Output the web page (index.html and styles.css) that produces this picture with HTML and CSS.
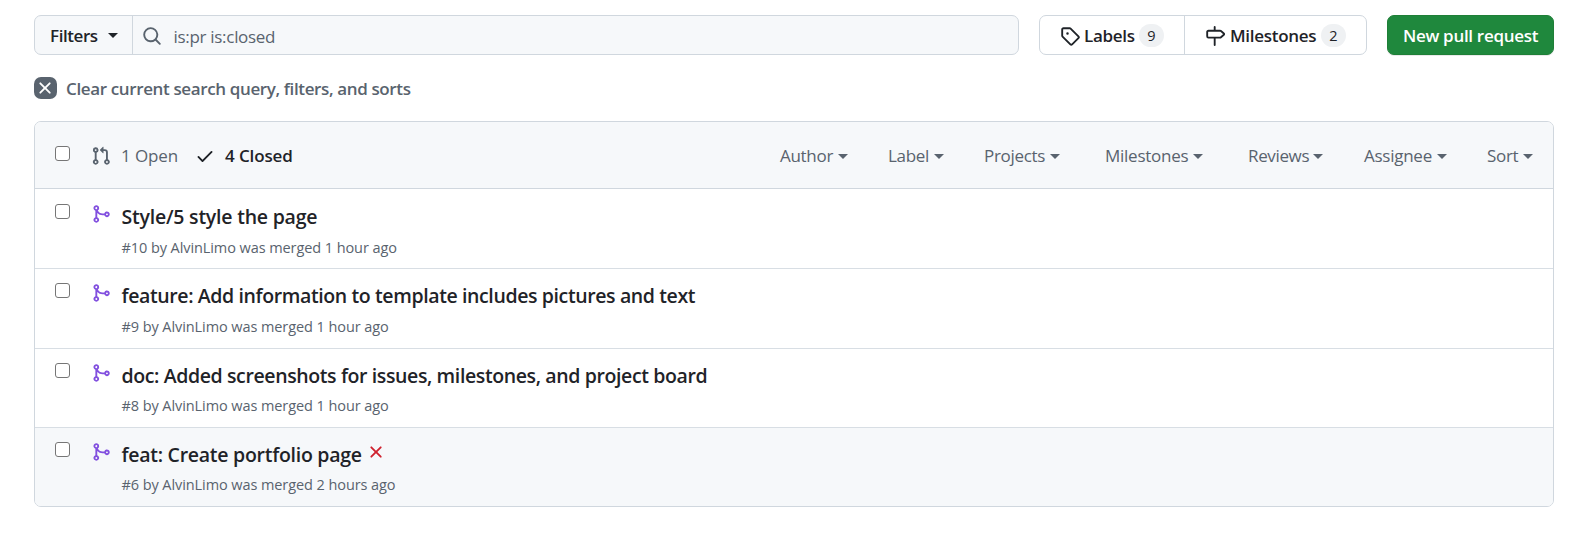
FILE: index.html
```html
<!DOCTYPE html>
<html lang="en">
<head>
<meta charset="utf-8">
<title>Pull requests</title>
<link rel="stylesheet" href="styles.css">
</head>
<body>
<svg width="0" height="0" class="sprite">
  <symbol id="merge" viewBox="0 0 16 16"><path d="M5.45 5.154A4.25 4.25 0 0 0 9.25 7.5h1.378a2.251 2.251 0 1 1 0 1.5H9.25A5.734 5.734 0 0 1 5 7.123v3.505a2.25 2.25 0 1 1-1.5 0V5.372a2.25 2.25 0 1 1 1.95-.218ZM4.25 13.5a.75.75 0 1 0 0-1.5.75.75 0 0 0 0 1.5Zm8.5-4.5a.75.75 0 1 0 0-1.5.75.75 0 0 0 0 1.5ZM5 3.25a.75.75 0 1 0 0 .005V3.25Z"/></symbol>
  <symbol id="x" viewBox="0 0 16 16"><path d="M3.72 3.72a.75.75 0 0 1 1.06 0L8 6.94l3.22-3.22a.749.749 0 0 1 1.275.326.749.749 0 0 1-.215.734L9.06 8l3.22 3.22a.749.749 0 0 1-.326 1.275.749.749 0 0 1-.734-.215L8 9.06l-3.22 3.22a.751.751 0 0 1-1.042-.018.751.751 0 0 1-.018-1.042L6.94 8 3.72 4.78a.75.75 0 0 1 0-1.06Z"/></symbol>
</svg>
<main class="page">
  <div class="toolbar">
    <div class="search">
      <button class="filters"><span>Filters</span><i class="caret"></i></button>
      <div class="query">
        <svg class="icon" viewBox="0 0 16 16"><path d="M10.68 11.74a6 6 0 0 1-7.922-8.982 6 6 0 0 1 8.982 7.922l3.04 3.04a.749.749 0 0 1-.326 1.275.749.749 0 0 1-.734-.215ZM11.5 7a4.499 4.499 0 1 0-8.997 0A4.499 4.499 0 0 0 11.5 7Z"/></svg>
        <span class="query-text">is:pr is:closed</span>
      </div>
    </div>
    <nav class="subnav">
      <a class="subnav-item labels"><svg class="icon" viewBox="0 0 16 16"><path d="M1 7.775V2.75C1 1.784 1.784 1 2.75 1h5.025c.464 0 .91.184 1.238.513l6.25 6.25a1.75 1.75 0 0 1 0 2.474l-5.026 5.026a1.75 1.75 0 0 1-2.474 0l-6.25-6.25A1.752 1.752 0 0 1 1 7.775Zm1.5 0c0 .066.026.13.073.177l6.25 6.25a.25.25 0 0 0 .354 0l5.025-5.025a.25.25 0 0 0 0-.354l-6.25-6.25a.25.25 0 0 0-.177-.073H2.75a.25.25 0 0 0-.25.25ZM6 5a1 1 0 1 1 0 2 1 1 0 0 1 0-2Z"/></svg><span class="subnav-text">Labels</span><span class="counter">9</span></a>
      <a class="subnav-item milestones"><svg class="icon" viewBox="0 0 16 16"><path d="M7.75 0a.75.75 0 0 1 .75.75V3h3.634c.414 0 .814.147 1.13.414l2.07 1.75a1.75 1.75 0 0 1 0 2.672l-2.07 1.75a1.75 1.75 0 0 1-1.13.414H8.5v5.25a.75.75 0 0 1-1.5 0V10H2.75A1.75 1.75 0 0 1 1 8.25v-3.5C1 3.784 1.784 3 2.75 3H7V.75A.75.75 0 0 1 7.75 0Zm4.384 8.5a.25.25 0 0 0 .161-.06l2.07-1.75a.248.248 0 0 0 0-.38l-2.07-1.75a.25.25 0 0 0-.161-.06H2.75a.25.25 0 0 0-.25.25v3.5c0 .138.112.25.25.25h9.384Z"/></svg><span class="subnav-text">Milestones</span><span class="counter">2</span></a>
    </nav>
    <button class="new-pr">New pull request</button>
  </div>

  <a class="clear"><span class="clear-icon"><svg class="icon" viewBox="0 0 16 16"><use href="#x"/></svg></span><span class="clear-text">Clear current search query, filters, and sorts</span></a>

  <section class="list">
    <header class="list-head">
      <span class="box"></span>
      <a class="state open"><svg class="icon" viewBox="0 0 16 16"><path d="M1.5 3.25a2.25 2.25 0 1 1 3 2.122v5.256a2.251 2.251 0 1 1-1.5 0V5.372A2.25 2.25 0 0 1 1.5 3.25Zm5.677-.177L9.573.677A.25.25 0 0 1 10 .854V2.5h1A2.5 2.5 0 0 1 13.5 5v5.628a2.251 2.251 0 1 1-1.5 0V5a1 1 0 0 0-1-1h-1v1.646a.25.25 0 0 1-.427.177L7.177 3.427a.25.25 0 0 1 0-.354ZM3.75 2.5a.75.75 0 1 0 0 1.5.75.75 0 0 0 0-1.5Zm0 9.5a.75.75 0 1 0 0 1.5.75.75 0 0 0 0-1.5Zm8.25.75a.75.75 0 1 0 1.5 0 .75.75 0 0 0-1.5 0Z"/></svg><span>1 Open</span></a>
      <a class="state closed"><svg class="icon" viewBox="0 0 16 16"><path d="M13.78 4.22a.75.75 0 0 1 0 1.06l-7.25 7.25a.75.75 0 0 1-1.06 0L2.22 9.28a.751.751 0 0 1 .018-1.042.751.751 0 0 1 1.042-.018L6 10.94l6.72-6.72a.75.75 0 0 1 1.06 0Z"/></svg><span>4 Closed</span></a>
      <nav class="menus">
        <a class="menu author"><span>Author</span><i class="caret"></i></a>
        <a class="menu label"><span>Label</span><i class="caret"></i></a>
        <a class="menu projects"><span>Projects</span><i class="caret"></i></a>
        <a class="menu miles"><span>Milestones</span><i class="caret"></i></a>
        <a class="menu reviews"><span>Reviews</span><i class="caret"></i></a>
        <a class="menu assignee"><span>Assignee</span><i class="caret"></i></a>
        <a class="menu sort"><span>Sort</span><i class="caret"></i></a>
      </nav>
    </header>
    <article class="row">
      <span class="box"></span>
      <svg class="icon merged"><use href="#merge"/></svg>
      <div class="body"><div class="title t1"><span>Style/5 style the page</span></div><div class="meta">#10 by AlvinLimo was merged 1 hour ago</div></div>
    </article>
    <article class="row tall">
      <span class="box"></span>
      <svg class="icon merged"><use href="#merge"/></svg>
      <div class="body"><div class="title t2"><span>feature: Add information to template includes pictures and text</span></div><div class="meta">#9 by AlvinLimo was merged 1 hour ago</div></div>
    </article>
    <article class="row snug">
      <span class="box"></span>
      <svg class="icon merged"><use href="#merge"/></svg>
      <div class="body"><div class="title t3"><span>doc: Added screenshots for issues, milestones, and project board</span></div><div class="meta">#8 by AlvinLimo was merged 1 hour ago</div></div>
    </article>
    <article class="row snug hovered">
      <span class="box"></span>
      <svg class="icon merged"><use href="#merge"/></svg>
      <div class="body"><div class="title t4"><span>feat: Create portfolio page</span><svg class="icon failed"><use href="#x"/></svg></div><div class="meta">#6 by AlvinLimo was merged 2 hours ago</div></div>
    </article>
  </section>
</main>
</body>
</html>
```
FILE: styles.css
```css
* { box-sizing: border-box; }
body {
  margin: 0;
  background: #fff;
  color: #1f2328;
  font-family: "Segoe UI", "Open Sans", "Noto Sans", sans-serif;
  font-size: 17px;
  line-height: 24px;
  white-space: nowrap;
}
.sprite { display: block; height: 0; }
.page { padding: 15px 36px 0 34px; }
button { font: inherit; color: inherit; margin: 0; padding: 0; border: 0; background: none; }
.icon { width: 20px; height: 20px; fill: currentColor; flex: none; display: block; }
.caret { display: block; flex: none; border: 5px solid transparent; border-top-color: currentColor; border-bottom: 0; }

.toolbar { display: flex; height: 40px; }
.search { display: flex; width: 985px; border: 1px solid #d0d7de; border-radius: 7px; background: #f6f8fa; }
.filters { display: flex; align-items: center; width: 98px; padding-left: 15px; border-right: 1px solid #d0d7de; font-weight: 600; letter-spacing: -0.42px; }
.filters span { width: 58px; padding-top: 2px; text-align: left; }
.query { display: flex; align-items: center; padding: 0 0 0 9px; color: #59636e; }
.query .icon { margin-top: 2px; }
.query-text { margin: 4px 0 0 11.5px; letter-spacing: -0.3px; }
.subnav { display: flex; margin-left: 20px; width: 328px; border: 1px solid #d0d7de; border-radius: 7px; font-weight: 600; letter-spacing: -0.3px; }
.subnav-item { display: flex; align-items: center; padding-left: 20px; }
.subnav-item .icon { margin-top: 1px; }
.labels { width: 145px; border-right: 1px solid #d0d7de; }
.subnav-text { margin-left: 4px; padding-top: 2px; width: 55px; }
.milestones .subnav-text { margin-left: 5px; width: 91px; }
.counter { width: 25px; height: 23px; border-radius: 12px; background: #eff1f3; font-size: 14.5px; line-height: 24px; text-align: center; font-weight: 500; letter-spacing: 0; }
.new-pr { margin-left: 20px; padding-top: 2px; width: 167px; border: 1px solid #1f7f37; border-radius: 7px; background: #1f883d; color: #fff; font-weight: 600; letter-spacing: -0.3px; box-shadow: 0 1px 0 rgba(31, 35, 40, 0.1); }

.clear { display: flex; align-items: center; gap: 9px; height: 23px; margin-top: 21px; color: #59636e; font-weight: 600; letter-spacing: -0.37px; }
.clear-text { padding-top: 2px; }
.clear-icon { display: grid; place-items: center; width: 23px; height: 22px; border-radius: 7px; background: #59636e; color: #fff; }
.clear-icon .icon { margin-left: -1px; }

.list { margin-top: 22px; border: 1px solid #d0d7de; border-radius: 7px; overflow: hidden; }
.list-head { display: flex; height: 67px; border-bottom: 1px solid #d0d7de; background: #f6f8fa; color: #59636e; letter-spacing: -0.3px; }
.box { flex: none; width: 15px; height: 15px; margin-left: 20px; border: 1px solid #767676; border-radius: 3px; background: #fff; }
.list-head .box { margin-top: 24px; }
.state { display: flex; align-items: center; gap: 10px; letter-spacing: -0.12px; }
.state .icon { margin-top: 1px; }
.state span, .menu span { padding-top: 2px; }
.open { margin-left: 21px; width: 104px; }
.closed { width: 100px; color: #1f2328; font-weight: 600; }
.menus { display: flex; align-items: center; margin-left: auto; padding-right: 20px; }
.menu { display: flex; align-items: center; justify-content: space-between; }
.menu .caret { margin-top: 3px; }
.author { width: 68px; margin-right: 40px; }
.label { width: 56px; margin-right: 40px; }
.projects { width: 76px; margin-right: 45px; }
.miles { width: 98px; margin-right: 45px; letter-spacing: -0.26px; }
.reviews { width: 75px; margin-right: 41px; letter-spacing: -0.36px; }
.assignee { width: 83px; margin-right: 40px; letter-spacing: -0.26px; }
.sort { width: 46px; }

.row { display: flex; height: 79px; padding-top: 14px; border-top: 1px solid #d8dee4; }
.list-head + .row { border-top: 0; padding-top: 15px; }
.tall { height: 80px; }
.hovered { background: #f6f8fa; }
.merged { margin-left: 21px; color: #8250df; }
.body { margin-left: 10.5px; }
.title { display: flex; height: 26px; line-height: 25px; font-size: 19.5px; font-weight: 600; letter-spacing: -0.22px; }
.t2, .t3 { letter-spacing: -0.385px; }
.t4 { letter-spacing: -0.27px; }
.meta { margin-top: 6px; font-size: 14.5px; line-height: 23px; color: #59636e; letter-spacing: -0.08px; }
.snug .meta { margin-top: 5px; }
.failed { margin-left: 4px; color: #cf222e; }
```
